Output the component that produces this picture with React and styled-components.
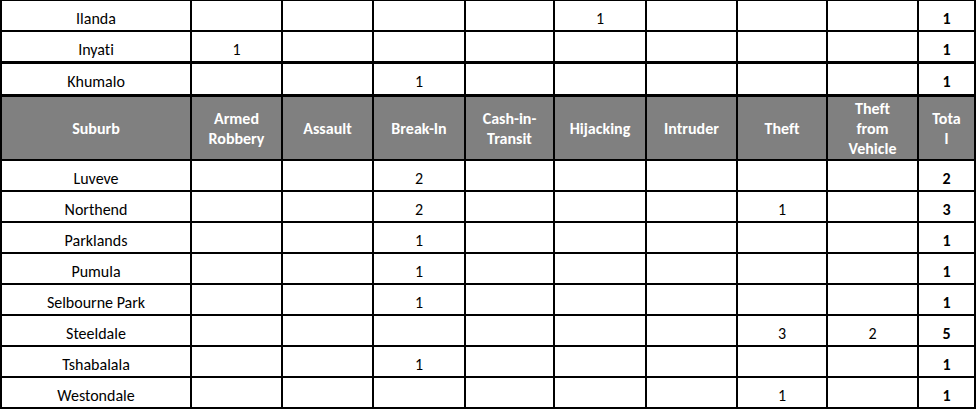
import React from 'react';
import styled, { createGlobalStyle } from 'styled-components';

const GlobalStyle = createGlobalStyle`
  html, body {
    margin: 0;
    padding: 0;
    background: #ffffff;
  }
  body {
    font-family: Carlito, Calibri, "Open Sans", "Liberation Sans", sans-serif;
    font-variant-ligatures: none;
    color: #000;
  }
`;

const Page = styled.div`
  width: 978px;
  height: 410px;
  overflow: hidden;
  background: #fff;
`;

const Table = styled.table`
  border-collapse: collapse;
  table-layout: fixed;
  width: 976px;
  margin-top: -1px;
  font-size: 16px;
`;

const Row = styled.tr`
  height: ${(p) => p.$height || 31}px;
  & > td,
  & > th {
    border-top-width: ${(p) => p.$topBorder || 2}px;
  }
`;

const Cell = styled.td`
  border: 2px solid #000;
  text-align: center;
  vertical-align: middle;
  padding: 7px 4px 0;
  font-weight: ${(p) => (p.$bold ? 700 : 400)};
  line-height: 18px;
  white-space: nowrap;
`;

const HeadCell = styled.th`
  border: 2px solid #000;
  background: #808080;
  color: #fff;
  font-weight: 700;
  font-size: 16px;
  text-align: center;
  vertical-align: middle;
  padding: 2px 2px 0;
  line-height: 20px;
  white-space: nowrap;
`;

const widths = [190, 91, 91, 92, 89, 92, 91, 90, 91, 57];

const headers = [
  ['Suburb'],
  ['Armed', 'Robbery'],
  ['Assault'],
  ['Break-In'],
  ['Cash-in-', 'Transit'],
  ['Hijacking'],
  ['Intruder'],
  ['Theft'],
  ['Theft', 'from', 'Vehicle'],
  ['Tota', 'l'],
];

// columns: robbery, assault, break-in, cit, hijack, intruder, theft, tfv
const topRows = [
  { name: 'Ilanda', v: ['', '', '', '', 1, '', '', ''], total: 1 },
  { name: 'Inyati', v: [1, '', '', '', '', '', '', ''], total: 1 },
  { name: 'Khumalo', v: ['', '', 1, '', '', '', '', ''], total: 1, top: 3, height: 33 },
];

const rows = [
  { name: 'Luveve', v: ['', '', 2, '', '', '', '', ''], total: 2 },
  { name: 'Northend', v: ['', '', 2, '', '', '', 1, ''], total: 3 },
  { name: 'Parklands', v: ['', '', 1, '', '', '', '', ''], total: 1 },
  { name: 'Pumula', v: ['', '', 1, '', '', '', '', ''], total: 1 },
  { name: 'Selbourne Park', v: ['', '', 1, '', '', '', '', ''], total: 1 },
  { name: 'Steeldale', v: ['', '', '', '', '', '', 3, 2], total: 5 },
  { name: 'Tshabalala', v: ['', '', 1, '', '', '', '', ''], total: 1 },
  { name: 'Westondale', v: ['', '', '', '', '', '', 1, ''], total: 1 },
];

function DataRow({ row }) {
  return (
    <Row $topBorder={row.top} $height={row.height}>
      <Cell>{row.name}</Cell>
      {row.v.map((val, i) => (
        <Cell key={i}>{val}</Cell>
      ))}
      <Cell $bold>{row.total}</Cell>
    </Row>
  );
}

export default function App() {
  return (
    <Page>
      <GlobalStyle />
      <Table>
        <colgroup>
          {widths.map((w, i) => (
            <col key={i} style={{ width: w }} />
          ))}
        </colgroup>
        <tbody>
          {topRows.map((r) => (
            <DataRow key={r.name} row={r} />
          ))}
          <Row $topBorder={3} $height={64}>
            {headers.map((lines, i) => (
              <HeadCell key={i}>
                {lines.map((l, j) => (
                  <React.Fragment key={j}>
                    {j > 0 && <br />}
                    {l}
                  </React.Fragment>
                ))}
              </HeadCell>
            ))}
          </Row>
          {rows.map((r) => (
            <DataRow key={r.name} row={r} />
          ))}
        </tbody>
      </Table>
    </Page>
  );
}
